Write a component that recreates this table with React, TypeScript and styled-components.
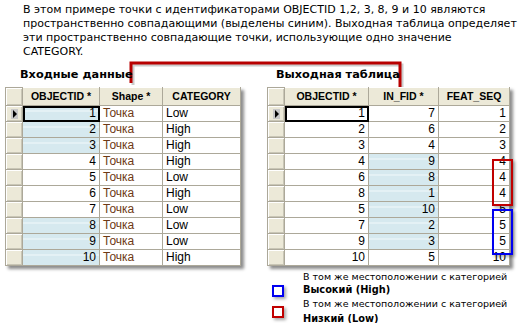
import React from 'react';
import styled, { createGlobalStyle, css } from 'styled-components';

const GlobalStyle = createGlobalStyle`
  html, body {
    margin: 0;
    padding: 0;
    background: #fff;
  }
`;

const Page = styled.div`
  position: relative;
  width: 523px;
  height: 323px;
  overflow: hidden;
  background: #fff;
  font-family: 'Liberation Sans', Arial, sans-serif;
  color: #000;
`;

const Intro = styled.p`
  margin: 0;
  padding: 3px 0 0 23px;
  font-family: 'DejaVu Sans', Verdana, sans-serif;
  font-size: 11px;
  line-height: 14px;
  white-space: nowrap;
`;

const Panels = styled.div`
  position: relative;
  display: flex;
  gap: 26px;
  padding-left: 5px;
`;

const Connector = styled.svg`
  position: absolute;
  left: 0;
  top: 0;
  overflow: visible;
  pointer-events: none;
`;

const Panel = styled.div<{ $width: number }>`
  position: relative;
  width: ${({ $width }) => $width}px;
`;

const Title = styled.div<{ $indent: number }>`
  height: 28px;
  box-sizing: border-box;
  padding: 9px 0 0 ${({ $indent }) => $indent}px;
  font-family: 'DejaVu Sans', Verdana, sans-serif;
  font-weight: bold;
  font-size: 11.3px;
  line-height: 14px;
`;

const Grid = styled.table`
  border-collapse: collapse;
  table-layout: fixed;
  border: 1px solid #3c3c3c;
  box-shadow: 3px 3px 3px rgba(0, 0, 0, 0.45);
  background: #fff;
  font-size: 12px;
`;

const Head = styled.th<{ $width: number }>`
  width: ${({ $width }) => $width}px;
  height: 17px;
  padding: 0 3px;
  background: #ece9d8;
  border: 1px solid #aca899;
  border-top: 1px solid #fff;
  font-size: 10.5px;
  font-weight: bold;
  text-align: center;
  white-space: nowrap;
  line-height: 17px;
`;

const Selector = styled.td`
  width: 16px;
  height: 15px;
  padding: 0;
  background: #ece9d8;
  border: 1px solid #aca899;
  box-shadow: inset 1px 1px 0 #fff, inset -1px -1px 0 #c9c6b6;
  text-align: center;
  vertical-align: middle;
`;

const Pointer = styled.span`
  display: inline-block;
  width: 7px;
  height: 10px;
  background: #c8c8c8;
  position: relative;
  vertical-align: middle;
  &::after {
    content: '';
    position: absolute;
    left: 2px;
    top: 1px;
    border-left: 4px solid #000;
    border-top: 4px solid transparent;
    border-bottom: 4px solid transparent;
  }
`;

const Cell = styled.td<{ $align?: 'left' | 'right'; $hl?: boolean; $current?: boolean; $shape?: boolean }>`
  height: 15px;
  padding: 0 3px;
  border: 1px solid #aca899;
  text-align: ${({ $align }) => $align || 'right'};
  line-height: 15px;
  white-space: nowrap;
  color: ${({ $shape }) => ($shape ? '#6e3a14' : '#000')};
  ${({ $hl }) =>
    $hl &&
    css`
      background: linear-gradient(to bottom, #d6e9ef 0 4px, #f2f9fb 4px 5px, #d6e9ef 5px);
    `}
  ${({ $current }) =>
    $current &&
    css`
      outline: 2px solid #000;
      outline-offset: -2px;
    `}
`;

const Mark = styled.div<{ $color: string; $top: number; $height: number }>`
  position: absolute;
  left: 225px;
  top: ${({ $top }) => $top + 28}px;
  width: 21px;
  height: ${({ $height }) => $height}px;
  box-sizing: border-box;
  border: 2px solid ${({ $color }) => $color};
  box-shadow: 2px 2px 3px rgba(0, 0, 0, 0.3);
`;

const Legend = styled.div`
  display: flex;
  flex-direction: column;
  margin: 4px 0 0 5px;
  font-family: 'DejaVu Sans', Verdana, sans-serif;
  font-size: 9.5px;
  white-space: nowrap;
`;

const LegendItem = styled.div`
  display: grid;
  grid-template-columns: 31px 1fr;
`;

const LegendNote = styled.div`
  grid-column: 2;
  line-height: 13px;
`;

const LegendSwatch = styled.div<{ $color: string; $shift: number }>`
  grid-column: 1;
  width: 12px;
  height: 12px;
  box-sizing: border-box;
  margin-top: ${({ $shift }) => $shift}px;
  border: 2px solid ${({ $color }) => $color};
  box-shadow: 2px 2px 3px rgba(0, 0, 0, 0.35);
`;

const LegendLabel = styled.div<{ $gap: number }>`
  grid-column: 2;
  margin-top: ${({ $gap }) => $gap}px;
  font-weight: bold;
  font-size: 9.8px;
  line-height: 13px;
`;

const inputRows = [
  { id: 1, cat: 'Low', hl: true },
  { id: 2, cat: 'High', hl: true },
  { id: 3, cat: 'High', hl: true },
  { id: 4, cat: 'High', hl: false },
  { id: 5, cat: 'Low', hl: false },
  { id: 6, cat: 'High', hl: false },
  { id: 7, cat: 'Low', hl: false },
  { id: 8, cat: 'Low', hl: true },
  { id: 9, cat: 'Low', hl: true },
  { id: 10, cat: 'High', hl: true },
];

const outputRows = [
  [1, 7, 1, false],
  [2, 6, 2, false],
  [3, 4, 3, false],
  [4, 9, 4, true],
  [6, 8, 4, true],
  [8, 1, 4, true],
  [5, 10, 5, true],
  [7, 2, 5, true],
  [9, 3, 5, true],
  [10, 5, 10, false],
] as const;

const App: React.FC = () => {
  return (
    <Page>
      <GlobalStyle />
      <Intro>
        В этом примере точки с идентификаторами OBJECTID 1,2, 3, 8, 9 и 10 являются
        <br />
        пространственно совпадающими (выделены синим). Выходная таблица определяет
        <br />
        эти пространственно совпадающие точки, использующие одно значение
        <br />
        CATEGORY.
      </Intro>
      <Panels>
        <Connector width="523" height="40">
          <polyline points="133,26 133,6 402,6 402,31" fill="none" stroke="#9a9a9a" strokeWidth="3" opacity="0.5" />
          <polyline points="131,24 131,4 400,4 400,29" fill="none" stroke="#b80000" strokeWidth="3" />
        </Connector>

        <Panel $width={236}>
          <Title $indent={15}>Входные данные</Title>
          <Grid>
            <thead>
              <tr>
                <Selector as="th" />
                <Head $width={70}>OBJECTID *</Head>
                <Head $width={56}>Shape *</Head>
                <Head $width={71}>CATEGORY</Head>
              </tr>
            </thead>
            <tbody>
              {inputRows.map((r, i) => (
                <tr key={r.id}>
                  <Selector>{i === 0 && <Pointer />}</Selector>
                  <Cell $hl={r.hl} $current={i === 0}>{r.id}</Cell>
                  <Cell $align="left" $shape>Точка</Cell>
                  <Cell $align="left">{r.cat}</Cell>
                </tr>
              ))}
            </tbody>
          </Grid>
        </Panel>

        <Panel $width={243}>
          <Title $indent={9}>Выходная таблица</Title>
          <Grid>
            <thead>
              <tr>
                <Selector as="th" />
                <Head $width={77}>OBJECTID *</Head>
                <Head $width={63}>IN_FID *</Head>
                <Head $width={64}>FEAT_SEQ</Head>
              </tr>
            </thead>
            <tbody>
              {outputRows.map(([oid, fid, seq, hl], i) => (
                <tr key={oid}>
                  <Selector>{i === 0 && <Pointer />}</Selector>
                  <Cell $current={i === 0}>{oid}</Cell>
                  <Cell $hl={hl}>{fid}</Cell>
                  <Cell>{seq}</Cell>
                </tr>
              ))}
            </tbody>
          </Grid>
          <Mark $color="#c00000" $top={72} $height={47} />
          <Mark $color="#0000f0" $top={122} $height={46} />
          <Legend>
            <LegendItem>
              <LegendNote>В том же местоположении с категорией</LegendNote>
              <LegendSwatch $color="#0000f0" $shift={2} />
              <LegendLabel $gap={0}>Высокий (High)</LegendLabel>
            </LegendItem>
            <LegendItem>
              <LegendNote>В том же местоположении с категорией</LegendNote>
              <LegendSwatch $color="#c00000" $shift={-4} />
              <LegendLabel $gap={2}>Низкий (Low)</LegendLabel>
            </LegendItem>
          </Legend>
        </Panel>
      </Panels>
    </Page>
  );
};

export default App;
